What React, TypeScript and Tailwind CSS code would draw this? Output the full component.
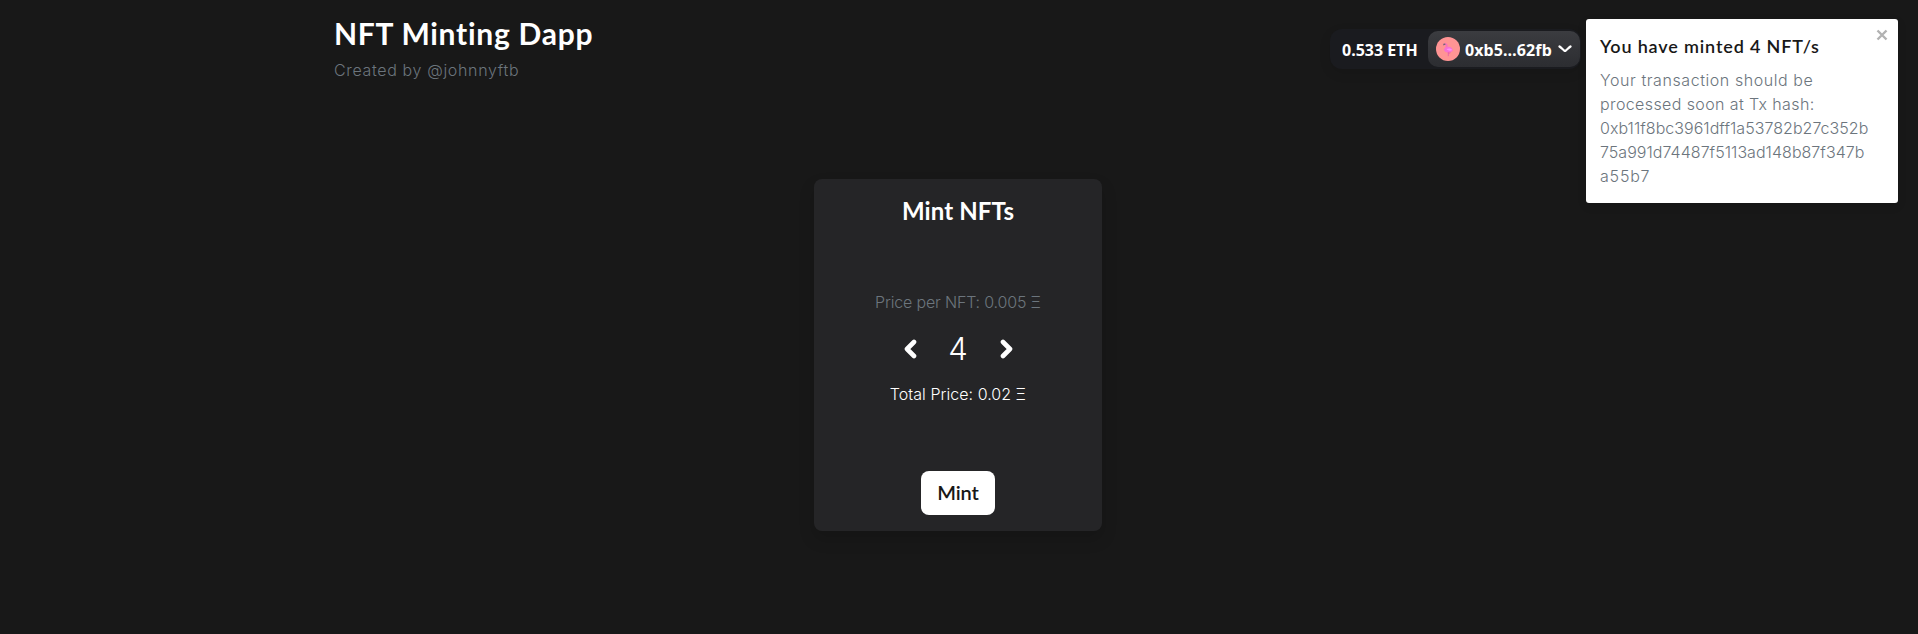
import { useState } from "react";

const heading = "font-['Lato','Liberation_Sans',sans-serif]";
const body = "font-['Inter','Liberation_Sans',sans-serif] font-light";

const hashLines = [
  { text: "Your transaction should be", spacing: "tracking-[0.57px]" },
  { text: "processed soon at Tx hash:", spacing: "tracking-[0.39px]" },
  { text: "0xb11f8bc3961dff1a53782b27c352b", spacing: "tracking-[0.04px]" },
  { text: "75a991d74487f5113ad148b87f347b", spacing: "tracking-[0.04px]" },
  { text: "a55b7", spacing: "tracking-[0.8px]" },
];

function Flamingo() {
  return (
    <svg width="24" height="24" viewBox="0 0 24 24" aria-hidden="true">
      <circle cx="12" cy="12" r="12" fill="#ff9494" />
      <path d="M8.3 7.5c2-.9 2.900.5 2.300 2.100-.7 1.700-.9 2.500.2 3" fill="none" stroke="#f76fc0" strokeWidth="1.8" strokeLinecap="round" />
      <path d="M8 12.300c.8-2.200 3.800-2.900 6-2.200 1.700.5 2.500 1.900 2.800 3.700-1.400 1.500-3.700 2-5.700 1.600-1.900-.3-3.300-1.500-3.100-3.100z" fill="#f772d2" />
      <path d="M10.500 12.200c1.700-1.200 4.400-1 5.700.7-1.600 1.200-4.100.9-5.700-.7z" fill="#ff92f4" />
      <path d="M12.300 15v4.200M12.300 16.500l2.200-.8" fill="none" stroke="#e960a8" strokeWidth=".9" />
      <path d="M7.200 8.600l.2-1.800 1.800-.4.3 1.300-1.400.3z" fill="#6d6670" />
    </svg>
  );
}

function Wallet() {
  return (
    <div className="flex h-10 w-[251px] items-center rounded-xl bg-[#1a1b1f] shadow-[0_4px_12px_rgba(0,0,0,0.1)] font-['Noto_Sans','Open_Sans',sans-serif] text-[16px] font-bold leading-5 text-white">
      <span className="w-[98px] whitespace-nowrap pl-[12px] pt-px">0.533 ETH</span>
      <button className="flex h-9 w-[152px] items-center rounded-[10px] bg-linear-to-b from-[#3b3c40] to-[#2c2d31] pl-2">
        <Flamingo />
        <span className="ml-[5px] w-[88px] whitespace-nowrap pt-px text-left tracking-[0.1px]">0xb5…62fb</span>
        <svg className="ml-[5px]" width="14" height="8" viewBox="0 0 14 8" fill="none" aria-hidden="true">
          <path d="M1.500 1.500C3.500 3 5 4.600 6.300 5.600q.7.6 1.400 0C9 4.600 10.500 3 12.500 1.500" stroke="white" strokeWidth="2.200" strokeLinecap="round" />
        </svg>
      </button>
    </div>
  );
}

function Toast({ onClose }: { onClose: () => void }) {
  return (
    <div className="absolute left-[1586px] top-[19px] h-[184px] w-[312px] rounded-[3px] bg-white px-[14px] pt-[14px] shadow-[0_3px_10px_rgba(0,0,0,0.1)]">
      <h2 className={`${heading} whitespace-nowrap text-[18px] font-semibold leading-[27px] tracking-[0.84px] text-[#181818]`}>You have minted 4 NFT/s</h2>
      <div className={`${body} mt-2 text-[16px] leading-6 text-[#6c757d]`}>
        {hashLines.map((line) => (
          <p key={line.text} className={`whitespace-nowrap ${line.spacing}`}>{line.text}</p>
        ))}
      </div>
      <button onClick={onClose} aria-label="Close" className="absolute right-[10px] top-[10px]">
        <svg width="12" height="12" viewBox="0 0 12 12" aria-hidden="true">
          <path d="M1.500 1.500l9 9M10.500 1.500l-9 9" stroke="#b2b2b2" strokeWidth="2.400" />
        </svg>
      </button>
    </div>
  );
}

function Chevron({ flip = false }: { flip?: boolean }) {
  return (
    <svg className={flip ? "-scale-x-100" : ""} width="13" height="20" viewBox="0 0 13 20" fill="none" aria-hidden="true">
      <path d="M10 3L3 10l7 7" stroke="white" strokeWidth="4.600" strokeLinecap="round" strokeLinejoin="round" />
    </svg>
  );
}

export default function App() {
  const [count, setCount] = useState(4);
  const [open, setOpen] = useState(true);
  return (
    <div className="relative h-[634px] w-[1918px] overflow-hidden bg-[#181818]">
      <header className="flex h-[179px] items-start justify-between pl-[334px] pr-[337px]">
        <div className="pt-[13px]">
          <h1 className={`${heading} whitespace-nowrap text-[30px] font-bold leading-10 tracking-[0.73px] text-white`}>NFT Minting Dapp</h1>
          <p className={`${body} mt-[5px] whitespace-nowrap text-[16px] leading-6 tracking-[0.65px] text-[#6c757d]`}>Created by @johnnyftb</p>
        </div>
        <div className="pt-[29px]"><Wallet /></div>
      </header>
      <main className="flex justify-center pr-[2px]">
        <section className="flex h-[352px] w-[288px] flex-col items-center rounded-lg bg-[#252527] pt-4 text-white shadow-[0_8px_16px_rgba(0,0,0,0.15)]">
          <h2 className={`${heading} whitespace-nowrap text-[24px] font-bold leading-8 tracking-[0.12px]`}>Mint NFTs</h2>
          <p className={`${body} mt-[63px] whitespace-nowrap text-[16px] leading-6 tracking-[-0.17px] text-[#6c757d]`}>Price per NFT: 0.005 Ξ</p>
          <div className="mt-[14px] flex h-[42px] w-[109px] items-center justify-between">
            <button aria-label="Fewer" onClick={() => setCount(Math.max(1, count - 1))}><Chevron /></button>
            <span className={`${body} text-[31px] leading-[38px]`}>{count}</span>
            <button aria-label="More" onClick={() => setCount(count + 1)}><Chevron flip /></button>
          </div>
          <p className={`${body} mt-[12px] whitespace-nowrap text-[16px] leading-6 tracking-[0.04px]`}>Total Price: {Number((count * 0.005).toFixed(3))} Ξ</p>
          <button className={`${heading} mt-[65px] h-11 w-[74px] rounded-lg bg-white pb-[3px] text-[20px] font-semibold tracking-[-0.1px] text-[#181818]`}>Mint</button>
        </section>
      </main>
      {open && <Toast onClose={() => setOpen(false)} />}
    </div>
  );
}
